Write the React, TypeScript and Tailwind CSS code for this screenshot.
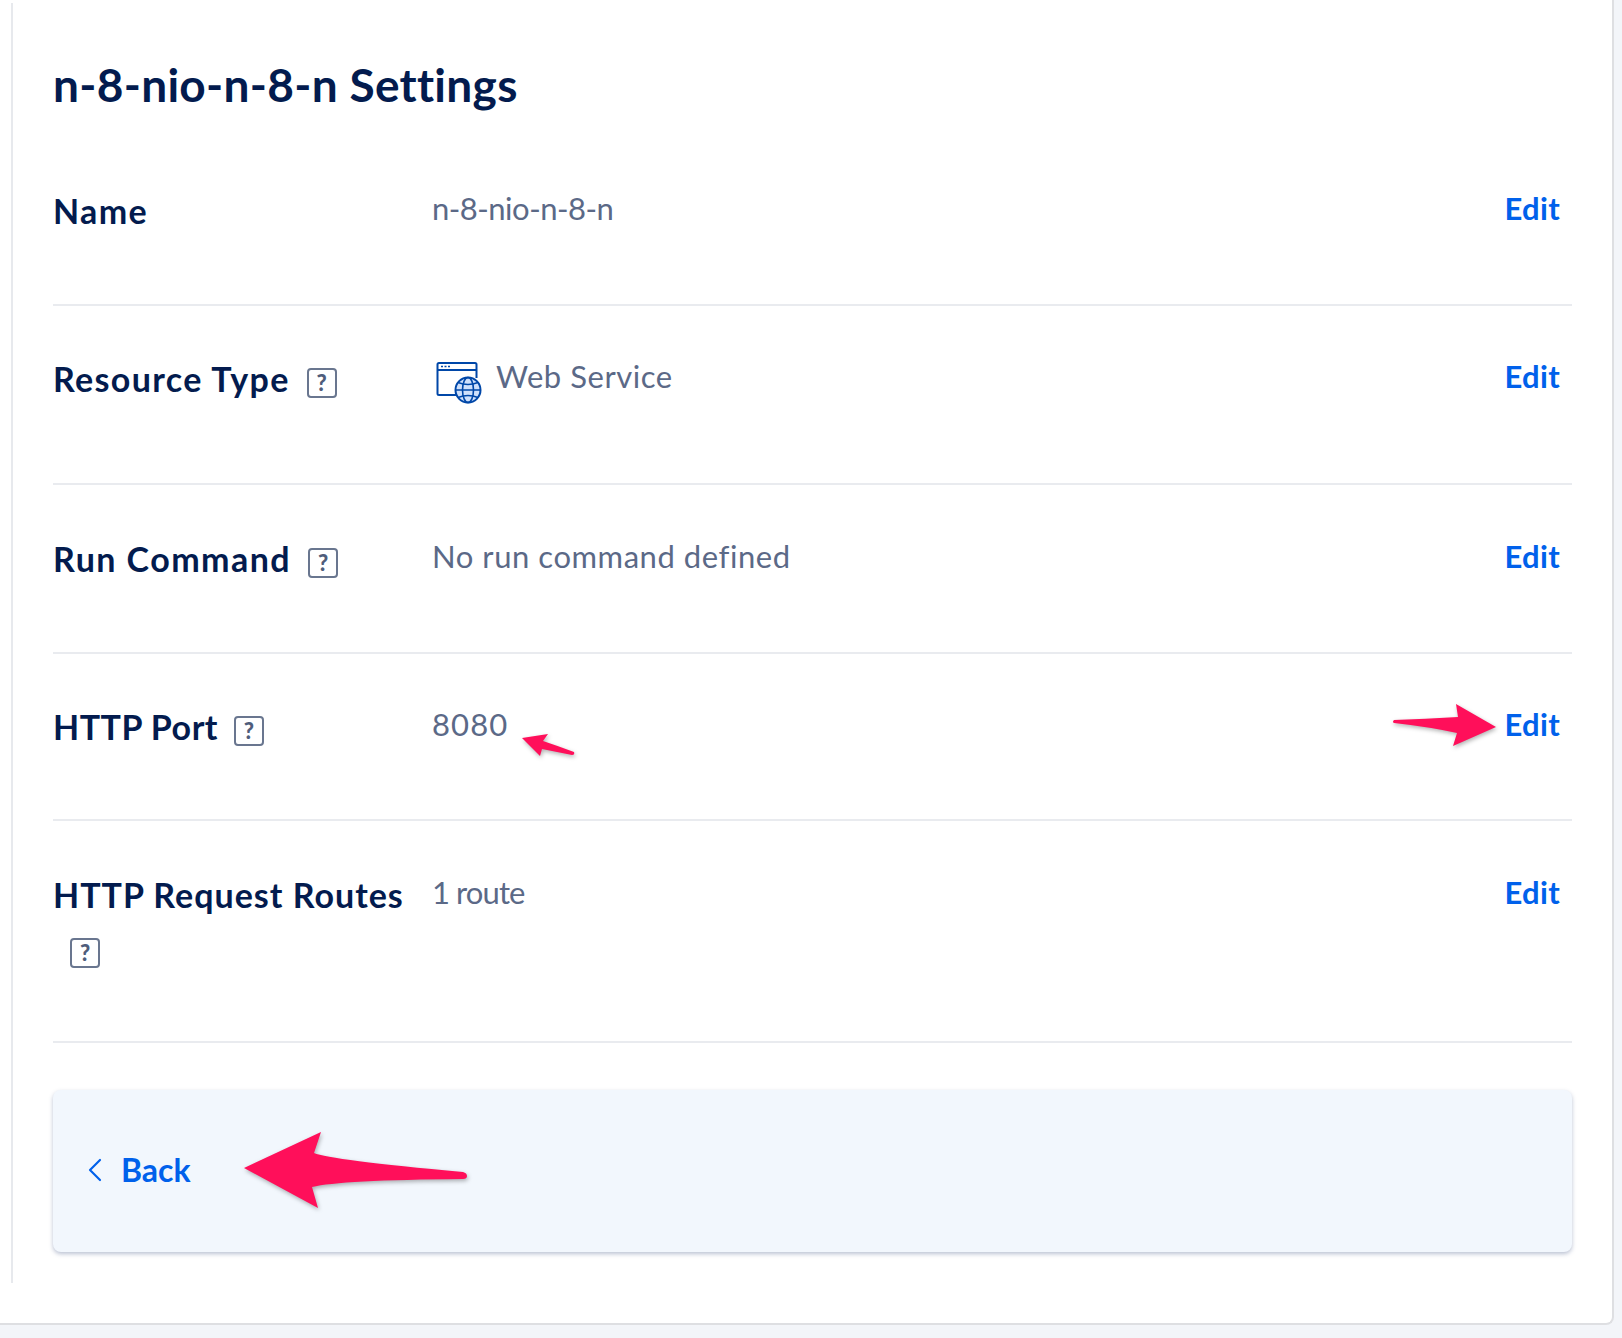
import { ChevronLeft } from 'lucide-react'

const font = { fontFamily: 'Lato, "Open Sans", sans-serif', fontVariantLigatures: 'none' }

function HelpBox({ className = '' }: { className?: string }) {
  return (
    <span className={`inline-flex h-[30px] w-[30px] items-center justify-center rounded-[4px] border-2 border-[#69768f] align-middle text-[22px] font-black leading-none tracking-normal text-[#4f5d7b] ${className}`}>
      ?
    </span>
  )
}

function WebIcon() {
  return (
    <svg width="46" height="44" viewBox="0 0 46 44" fill="none" className="ml-[4px] mr-[14px] mt-[3px] shrink-0">
      <path d="M20 34H3a1.5 1.5 0 0 1-1.5-1.5v-29A1.5 1.5 0 0 1 3 2h36a1.5 1.5 0 0 1 1.5 1.5V17" stroke="#0047a8" strokeWidth="2" />
      <path d="M2 9h38" stroke="#0047a8" strokeWidth="2" />
      <path d="M5 5.5h2M8.5 5.5h2M12 5.5h2" stroke="#0047a8" strokeWidth="1.6" />
      <circle cx="32" cy="29" r="12.5" fill="#cfe0fb" stroke="#0047a8" strokeWidth="2" />
      <ellipse cx="32" cy="29" rx="5.5" ry="12.5" stroke="#0047a8" strokeWidth="1.6" />
      <path d="M19.5 29h25M22 21.5q10 4 20 0M22 36.5q10-4 20 0" stroke="#0047a8" strokeWidth="1.6" />
    </svg>
  )
}

type RowProps = {
  label: React.ReactNode
  help?: React.ReactNode
  value: React.ReactNode
  rowClass: string
  labelClass: string
  valueClass?: string
}

function Row({ label, help, value, rowClass, labelClass, valueClass = 'tracking-[0.55px]' }: RowProps) {
  return (
    <div className={`flex border-b-2 border-[#e9ebef] ${rowClass}`}>
      <div className={`w-[379px] shrink-0 pr-[20px] text-[34px] font-bold leading-[38px] text-[#031b4e] ${labelClass}`}>
        {label}
        {help}
      </div>
      <div className={`-mt-[2px] flex flex-1 items-start text-[31px] leading-[36px] text-[#5b6987] ${valueClass}`}>{value}</div>
      <a className="-mt-[2px] mr-[12px] text-[31px] font-bold leading-[36px] tracking-[0.3px] text-[#0061eb]">Edit</a>
    </div>
  )
}

export default function App() {
  return (
    <div className="relative h-[1338px] w-full overflow-hidden bg-[#f3f5f9]" style={font}>
      <div className="h-[1325px] w-[1614px] rounded-br-lg border-r-2 border-b-2 border-[#dedfe2] bg-white pl-[11px] pt-[3px]">
        <div className="h-[1280px] border-l-2 border-[#e7e9ed] pl-[40px]">
          <div className="w-[1519px]">
            <h1 className="pb-[30px] pt-[60px] text-[46px] font-bold leading-[44px] tracking-[0.3px] text-[#031b4e]">n-8-nio-n-8-n Settings</h1>
            <Row rowClass="h-[169px] pt-[55px]" labelClass="tracking-[1.35px]" label="Name" value="n-8-nio-n-8-n" valueClass="tracking-[-0.5px]" />
            <Row rowClass="h-[179px] pt-[54px]" labelClass="tracking-[1.35px]" label="Resource Type" help={<HelpBox className="ml-[17px]" />} value={<><WebIcon /><span>Web Service</span></>} />
            <Row rowClass="h-[169px] pt-[55px]" labelClass="tracking-[1.45px]" label="Run Command" help={<HelpBox className="ml-[17px]" />} value="No run command defined" />
            <Row rowClass="h-[167px] pt-[54px]" labelClass="tracking-[0.5px]" label="HTTP Port" help={<HelpBox className="ml-[16px]" />} value="8080" valueClass="tracking-[1.1px]" />
            <Row rowClass="h-[222px] pt-[55px]" labelClass="tracking-[1px]" label="HTTP Request Routes" help={<HelpBox className="ml-[17px] mt-[24px]" />} value="1 route" valueClass="tracking-[-0.9px]" />
            <div className="mt-[47px] flex h-[162px] items-center rounded-lg bg-[#f2f7fd] pl-[22px] shadow-[0_2px_4px_rgba(60,80,130,0.35)]">
              <ChevronLeft className="mr-[6px] -mt-[2px] h-[40px] w-[40px] text-[#0061eb]" strokeWidth={1.3} />
              <span className="-mt-[2px] text-[32px] font-bold text-[#0061eb]">Back</span>
            </div>
          </div>
        </div>
      </div>
      {/* annotation arrows drawn on top of the screenshot */}
      <svg width="1622" height="1338" viewBox="0 0 1622 1338" className="pointer-events-none absolute left-0 top-0 drop-shadow-[1px_2px_2px_rgba(0,0,0,0.3)]">
        <path fill="#ff0f5a" d="M522 738 548 734 543 741Q558 746 574 752Q575 755 572 755Q557 752 542 749L540 756Z" />
        <path fill="#ff0f5a" d="M1496 727 1456 704 1458 717Q1425 719 1394 720Q1392 722 1394 723Q1430 727 1457 733L1453 746Z" />
        <path fill="#ff0f5a" d="M244 1168 321 1132 314 1153Q330 1160 463 1172Q467 1173 467 1176Q467 1179 463 1179Q340 1180 312 1187L318 1208Z" />
      </svg>
    </div>
  )
}
